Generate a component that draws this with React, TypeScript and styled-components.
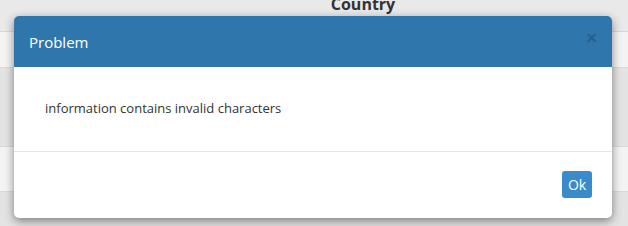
import styled, { createGlobalStyle } from "styled-components";

const GlobalStyle = createGlobalStyle`
  html, body {
    margin: 0;
    padding: 0;
    width: 628px;
    height: 226px;
    overflow: hidden;
    font-family: "Open Sans", "Liberation Sans", sans-serif;
    background: #f2f2f2;
  }
`;

const Page = styled.div`
  position: relative;
  width: 628px;
  height: 226px;
  overflow: hidden;
`;

const Table = styled.div`
  display: flex;
  flex-direction: column;
`;

const Row = styled.div<{ $height: number; $shade: string }>`
  display: grid;
  grid-template-columns: 280px 166px 1fr;
  height: ${(p) => p.$height}px;
  background: ${(p) => p.$shade};
  border-bottom: 1px solid #d9d9d9;
  box-sizing: border-box;
`;

const HeadCell = styled.div`
  font-size: 16px;
  font-weight: 700;
  color: #333;
  text-align: center;
  line-height: 16px;
  margin-top: -4px;
`;

const Modal = styled.div`
  position: absolute;
  left: 14px;
  top: 16px;
  width: 598px;
  background: #fff;
  border-radius: 5px;
  box-shadow: 0 3px 10px rgba(0, 0, 0, 0.45);
  overflow: hidden;
`;

const Header = styled.div`
  position: relative;
  height: 51px;
  background: #2f76ac;
  display: flex;
  align-items: center;
  padding: 0 15px;
`;

const Title = styled.h4`
  margin: 0;
  font-size: 15px;
  font-weight: 400;
  color: #fff;
`;

const Close = styled.button`
  position: absolute;
  right: 15px;
  top: 12px;
  border: 0;
  padding: 0;
  background: none;
  font-family: "Liberation Sans", sans-serif;
  font-size: 19px;
  font-weight: 700;
  line-height: 20px;
  color: rgba(0, 0, 0, 0.2);
`;

const Body = styled.div`
  height: 84px;
  padding: 0 31px 2px;
  display: flex;
  align-items: center;
  font-size: 13px;
  color: #333;
  box-sizing: border-box;
`;

const Footer = styled.div`
  border-top: 1px solid #e5e5e5;
  padding: 19px 20px 20px;
  display: flex;
  justify-content: flex-end;
`;

const OkButton = styled.button`
  width: 30px;
  height: 27px;
  padding: 0;
  border: 0;
  border-radius: 3px;
  background: #3a8bcb;
  color: #fff;
  font-family: "Open Sans", "Liberation Sans", sans-serif;
  font-size: 14px;
`;

export default function App() {
  return (
    <Page>
      <GlobalStyle />
      <Table>
        <Row $height={32} $shade="#e9e9e9">
          <div />
          <HeadCell>Country</HeadCell>
          <div />
        </Row>
        <Row $height={36} $shade="#f3f3f3" />
        <Row $height={79} $shade="#e3e3e3" />
        <Row $height={45} $shade="#f3f3f3" />
        <Row $height={40} $shade="#e3e3e3" />
      </Table>
      <Modal>
        <Header>
          <Title>Problem</Title>
          <Close>×</Close>
        </Header>
        <Body>information contains invalid characters</Body>
        <Footer>
          <OkButton>Ok</OkButton>
        </Footer>
      </Modal>
    </Page>
  );
}
